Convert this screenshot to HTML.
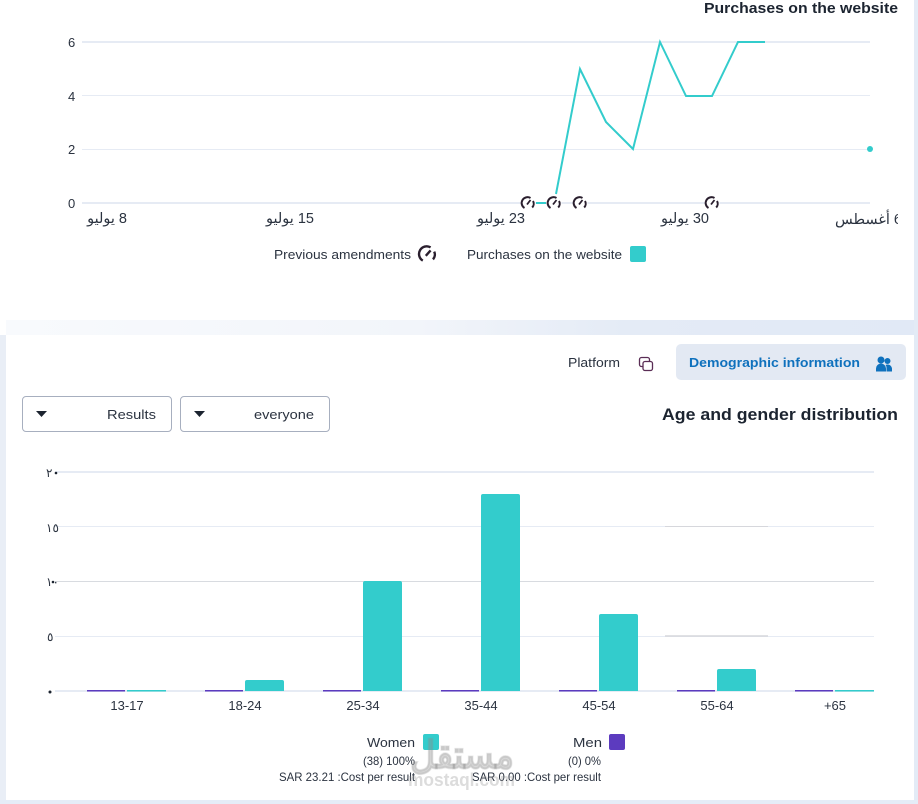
<!DOCTYPE html>
<html><head><meta charset="utf-8">
<style>
html,body{margin:0;padding:0;background:#fff;width:918px;height:804px;overflow:hidden}
svg{display:block}
text{font-family:"Liberation Sans","Noto Sans CJK SC",sans-serif;fill:#2b3340;font-size:13px}
.b{font-weight:700;fill:#1c2430;font-size:15px}
.ar{direction:rtl;text-anchor:start;font-size:14.500px}
</style></head><body>
<svg width="918" height="804" viewBox="0 0 918 804" xmlns="http://www.w3.org/2000/svg">
<defs>
<linearGradient id="g" x1="0" x2="1" y1="0" y2="0"><stop offset="0" stop-color="#f8fafd"/><stop offset=".45" stop-color="#f2f5fa"/><stop offset=".68" stop-color="#e4ebf6"/><stop offset="1" stop-color="#e1e9f6"/></linearGradient>
<clipPath id="cp"><rect x="820" y="205" width="78" height="26"/></clipPath>
<g id="ic" fill="none" stroke="#2a1f2e">
<circle cx="0" cy="0" r="7.500" fill="#fff" stroke="none"/>
<path d="M-3.500 5A5.500 5.500 0 0 1 2.500-5" stroke-width="2"/><path d="M5-2A5.500 5.500 0 0 1 4.200 4.500" stroke-width="2"/><path d="M-1 1.500L2.500-3" stroke-width="1.800"/>
</g>
</defs>
<rect width="918" height="804" fill="#fff"/>
<rect x="6" y="320" width="912" height="15" fill="url(#g)"/>
<rect x="914" y="0" width="4" height="804" fill="#e3ebf6"/>
<rect x="0" y="335" width="6" height="469" fill="#e9eef6"/>
<rect x="0" y="800" width="918" height="4" fill="#e5ecf7"/>

<text class="b" x="704" y="13" textLength="194" lengthAdjust="spacingAndGlyphs">Purchases on the website</text>
<g stroke="#e6ebf4"><line x1="82" x2="870" y1="42" y2="42" stroke-width="2"/><line x1="82" x2="870" y1="95.500" y2="95.500"/><line x1="82" x2="870" y1="149.500" y2="149.500"/><line x1="82" x2="870" y1="203" y2="203" stroke-width="2"/></g>
<text x="68" y="47">6</text><text x="68" y="101">4</text><text x="68" y="154">2</text><text x="68" y="208">0</text>
<polyline fill="none" stroke="#33cccc" stroke-width="2" points="556,194 580,69 606,122 633,149 660,42 686,96 712,96 738,42 765,42"/>
<line x1="536" x2="546" y1="203" y2="203" stroke="#33cccc" stroke-width="2"/>
<circle cx="870" cy="149" r="3" fill="#33cccc"/>
<use href="#ic" x="528" y="203"/><use href="#ic" x="554" y="203"/><use href="#ic" x="580" y="203"/><use href="#ic" x="712" y="203"/>
<text class="ar" x="127" y="223">8 يوليو</text>
<text class="ar" x="314" y="223">15 يوليو</text>
<text class="ar" x="525" y="223">23 يوليو</text>
<text class="ar" x="709" y="223">30 يوليو</text>
<g clip-path="url(#cp)"><text class="ar" x="902" y="224">6 أغسطس</text></g>
<text x="274" y="259" textLength="137" lengthAdjust="spacingAndGlyphs">Previous amendments</text>
<g transform="translate(427 254) scale(1.200)"><path d="M-3.500 5.500A6 6 0 0 1 3-5.500" fill="none" stroke="#2a1f2e" stroke-width="2"/><path d="M6-2A6 6 0 0 1 5 4.500" fill="none" stroke="#2a1f2e" stroke-width="2"/><path d="M-1 1.500L3-3" fill="none" stroke="#2a1f2e" stroke-width="2"/></g>
<text x="467" y="259" textLength="155" lengthAdjust="spacingAndGlyphs">Purchases on the website</text>
<rect x="630" y="246" width="16" height="16" rx="2" fill="#33cccc"/>

<text x="568" y="367" textLength="52" lengthAdjust="spacingAndGlyphs">Platform</text>
<g fill="none" stroke="#5a2d55" stroke-width="1.300"><path d="M643 366.500h-1.500a2 2 0 0 1-2-2v-5a2 2 0 0 1 2-2h6a2 2 0 0 1 2 2v2"/><rect x="643" y="361.500" width="9.500" height="9" rx="2"/></g>
<rect x="676" y="344" width="230" height="36" rx="5" fill="#e3e9f3"/>
<text x="689" y="367" textLength="171" lengthAdjust="spacingAndGlyphs" style="font-weight:700;fill:#0f71bd">Demographic information</text>
<g fill="#0f71bd"><circle cx="881" cy="360" r="3.500"/><circle cx="887.500" cy="361" r="3"/><path d="M876 371.500v-3a5 5 0 0 1 10 0v3z"/><path d="M886.500 371.500v-3.500q0-2-1-3a4.500 4.500 0 0 1 6.500 3.500v3z"/></g>

<rect x="22.500" y="396.500" width="149" height="35" rx="3.500" fill="#fff" stroke="#a7afbf"/>
<rect x="180.500" y="396.500" width="149" height="35" rx="3.500" fill="#fff" stroke="#a7afbf"/>
<path d="M36 411h11l-5.500 6z" fill="#1c2430"/><path d="M194 411h11l-5.500 6z" fill="#1c2430"/>
<text x="107" y="419" textLength="49" lengthAdjust="spacingAndGlyphs">Results</text>
<text x="254" y="419" textLength="60" lengthAdjust="spacingAndGlyphs">everyone</text>
<text class="b" x="662" y="420" textLength="236" lengthAdjust="spacingAndGlyphs" style="font-size:17px">Age and gender distribution</text>

<g stroke="#e6ebf4"><line x1="55" x2="874" y1="472" y2="472" stroke-width="2"/><line x1="55" x2="874" y1="526.500" y2="526.500"/><line x1="55" x2="874" y1="581.500" y2="581.500" stroke="#d8dbe0"/><line x1="55" x2="874" y1="636.500" y2="636.500"/><line x1="55" x2="874" y1="691" y2="691" stroke-width="2"/></g>
<g stroke="#d6d7dc"><line x1="665" x2="768" y1="526.500" y2="526.500"/><line x1="665" x2="768" y1="636" y2="636" stroke-width="1.500"/></g>
<text x="46" y="477" style="font-size:12px">٢</text><text x="46" y="532" style="font-size:12px">١٥</text><text x="46" y="586" style="font-size:12px">١٠</text><text x="47" y="641" style="font-size:12px">٥</text>
<g fill="#1c2430"><circle cx="56" cy="473" r="1.300"/><circle cx="53" cy="582" r="1.300"/><circle cx="50" cy="692" r="1.500"/></g>
<g fill="#33cccc"><path d="M245 691v-9a2 2 0 0 1 2-2h35a2 2 0 0 1 2 2v9z"/><path d="M363 691V583a2 2 0 0 1 2-2h35a2 2 0 0 1 2 2v108z"/><path d="M481 691V496a2 2 0 0 1 2-2h35a2 2 0 0 1 2 2v195z"/><path d="M599 691v-75a2 2 0 0 1 2-2h35a2 2 0 0 1 2 2v75z"/><path d="M717 691v-20a2 2 0 0 1 2-2h35a2 2 0 0 1 2 2v20z"/>
<rect x="127" y="690" width="39" height="1.500"/><rect x="835" y="690" width="39" height="1.500"/></g>
<g fill="#5c3bbf"><rect x="87" y="690" width="38" height="1.500"/><rect x="205" y="690" width="38" height="1.500"/><rect x="323" y="690" width="38" height="1.500"/><rect x="441" y="690" width="38" height="1.500"/><rect x="559" y="690" width="38" height="1.500"/><rect x="677" y="690" width="38" height="1.500"/><rect x="795" y="690" width="38" height="1.500"/></g>
<g text-anchor="middle"><text x="127" y="710">13-17</text><text x="245" y="710">18-24</text><text x="363" y="710">25-34</text><text x="481" y="710">35-44</text><text x="599" y="710">45-54</text><text x="717" y="710">55-64</text><text x="835" y="710">+65</text></g>

<text x="367" y="747" textLength="48" lengthAdjust="spacingAndGlyphs">Women</text>
<rect x="423" y="734" width="16" height="16" rx="2" fill="#33cccc"/>
<text x="573" y="747" textLength="29" lengthAdjust="spacingAndGlyphs">Men</text>
<rect x="609" y="734" width="16" height="16" rx="2" fill="#5c3bbf"/>
<text x="363" y="765" textLength="52" lengthAdjust="spacingAndGlyphs" style="font-size:12px">(38) 100%</text>
<text x="568" y="765" textLength="33" lengthAdjust="spacingAndGlyphs" style="font-size:12px">(0) 0%</text>
<text x="279" y="781" textLength="136" lengthAdjust="spacingAndGlyphs" style="font-size:12px">SAR 23.21 :Cost per result</text>
<text x="472" y="781" textLength="129" lengthAdjust="spacingAndGlyphs" style="font-size:12px">SAR 0.00 :Cost per result</text>

<text x="462" y="768" text-anchor="middle" textLength="104" lengthAdjust="spacingAndGlyphs" style="font-size:38px;font-weight:700;fill:#8c8c8c;fill-opacity:.33;stroke:#8c8c8c;stroke-opacity:.2;stroke-width:1.500">مستقل</text>
<text x="408" y="786" textLength="107" lengthAdjust="spacingAndGlyphs" style="font-size:18px;font-weight:700;fill:#8c8c8c;fill-opacity:.3">mostaql.com</text>
</svg>
</body></html>
